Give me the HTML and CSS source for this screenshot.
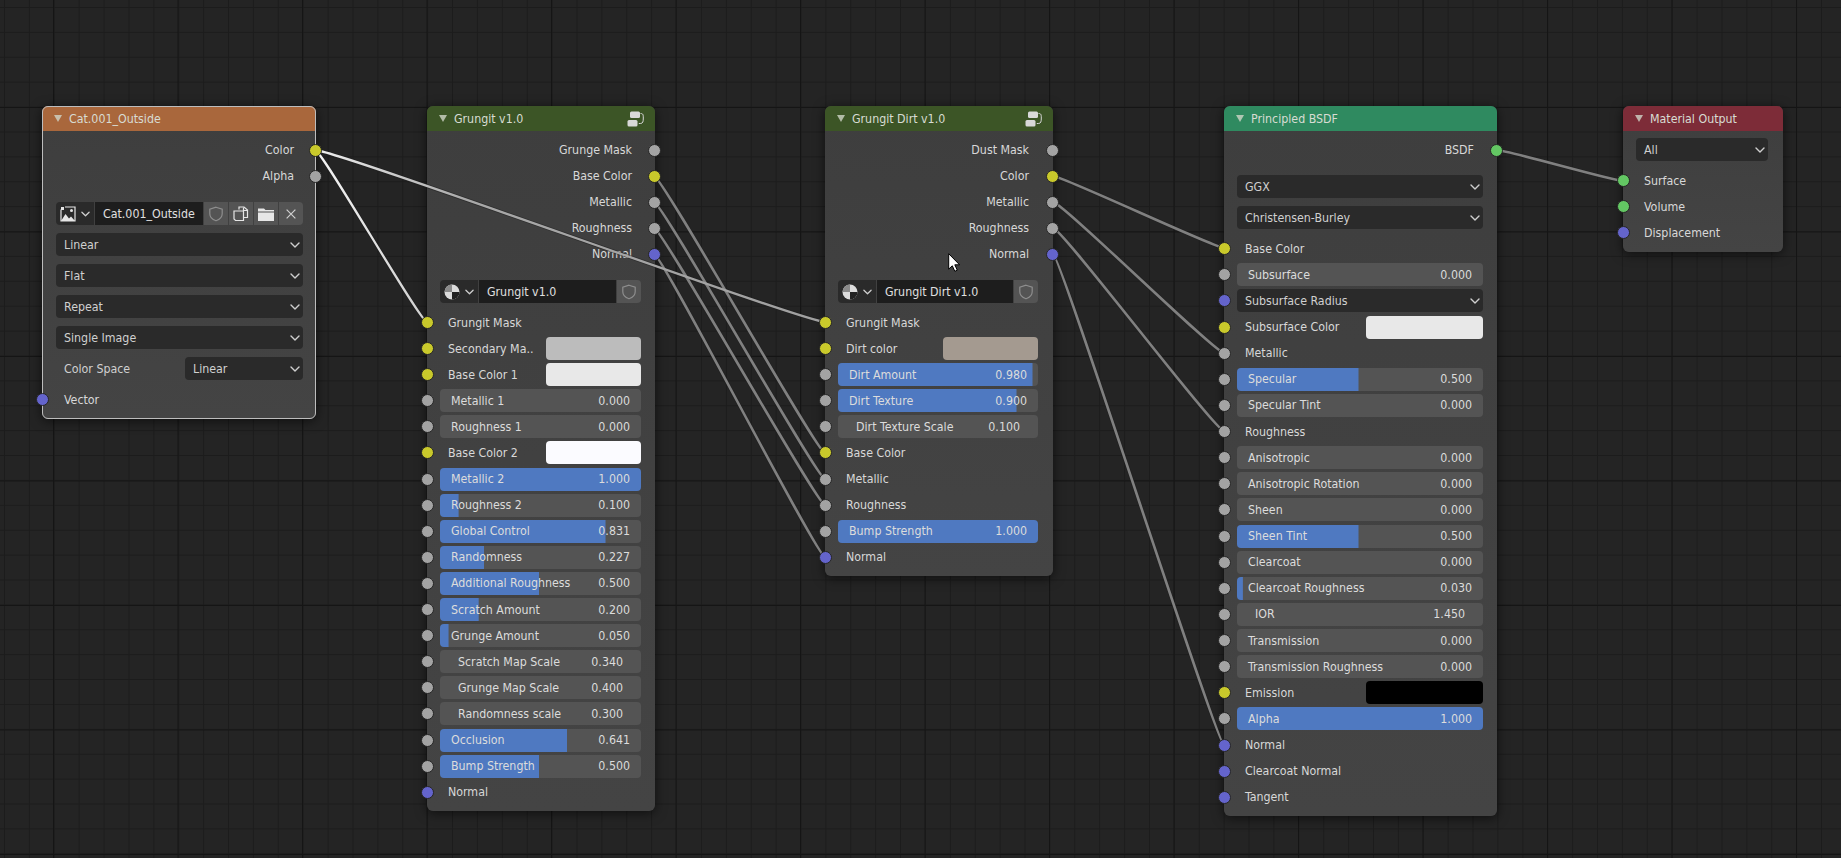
FILE: index.html
```html
<!DOCTYPE html>
<html lang="en">
<head>
<meta charset="utf-8">
<title>Shader Editor</title>
<link rel="stylesheet" href="styles.css">
</head>
<body>
<svg class="defs" width="0" height="0" aria-hidden="true">
  <defs>
    <symbol id="chev" viewBox="0 0 10 6"><path d="M1 1l4 4 4-4" fill="none" stroke="currentColor" stroke-width="1.4" stroke-linecap="round" stroke-linejoin="round"/></symbol>
    <symbol id="shield" viewBox="0 0 16 16"><path d="M8 1.2l6.2 2v4.6c0 3.6-3 5.9-6.2 7-3.2-1.100-6.200-3.400-6.200-7V3.200z" fill="none" stroke="currentColor" stroke-width="1.200"/></symbol>
    <symbol id="copy" viewBox="0 0 16 16"><path d="M6 3.500V1h5l3.500 3v7.500H11M1 5h9.500v9.500H2.500L1 13z" fill="none" stroke="currentColor" stroke-width="1.200"/><path d="M10.500 1.500v3h3.500" fill="none" stroke="currentColor" stroke-width="1.200"/></symbol>
    <symbol id="folder" viewBox="0 0 16 16"><path d="M0 2.500h6l1.500 1.500H16v1.500H0zM0 6.500h16V15H0z" fill="currentColor"/></symbol>
    <symbol id="xmark" viewBox="0 0 16 16"><path d="M3 3l10 10M13 3L3 13" fill="none" stroke="currentColor" stroke-width="1.400"/></symbol>
    <symbol id="image" viewBox="0 0 16 16"><path d="M1 3.500V15h14V1H5" fill="none" stroke="currentColor" stroke-width="1.200"/><path d="M1 15l4.500-7 3.500 4.500 2-2 4 4.500z" fill="currentColor"/><circle cx="11.500" cy="4.500" r="1.500" fill="currentColor"/><path d="M1 1h3v3H1z" fill="currentColor"/></symbol>
    <symbol id="sphere" viewBox="0 0 16 16"><circle cx="8" cy="8" r="7.500" fill="#dcdcdc"/><path d="M8 8V.5A7.500 7.500 0 0 0 .5 8z" fill="#8a8a8a"/><path d="M8 8h7.500A7.500 7.500 0 0 1 8 15.500z" fill="#222"/></symbol>
    <symbol id="group" viewBox="0 0 17 16"><rect x="3" y="0.500" width="10" height="6.500" rx="1.500" fill="currentColor"/><rect x="0.500" y="9" width="10" height="6.500" rx="1.500" fill="currentColor"/><path d="M13.500 2.500c2.500 0 2.800 1 2.800 4.500s-.3 5.500-3 5.500h-1.500" fill="none" stroke="currentColor" stroke-width="1"/></symbol>
    <linearGradient id="selA" gradientUnits="userSpaceOnUse" x1="315" y1="150" x2="427" y2="322"><stop offset="0" stop-color="#f4f4f4"/><stop offset="1" stop-color="#d0d0d0"/></linearGradient>
    <linearGradient id="selB" gradientUnits="userSpaceOnUse" x1="315" y1="150" x2="825" y2="322"><stop offset="0" stop-color="#f0f0f0"/><stop offset=".3" stop-color="#a8a8a8"/><stop offset="1" stop-color="#a0a0a0"/></linearGradient>
    <path id="w1" d="M315 150C322 150 420 322 427 322"/>
    <path id="w2" d="M315 150C336 150 804 322 825 322"/>
    <path id="w3" d="M654 176C662 176 817 453 825 453"/>
    <path id="w4" d="M654 202C662 202 817 479 825 479"/>
    <path id="w5" d="M654 228C662 228 817 505 825 505"/>
    <path id="w6" d="M654 254C662 254 817 557 825 557"/>
    <path id="w7" d="M1053 176C1062 176 1215 248 1224 248"/>
    <path id="w8" d="M1053 202C1062 202 1215 353 1224 353"/>
    <path id="w9" d="M1053 228C1062 228 1215 431 1224 431"/>
    <path id="w10" d="M1053 254C1060 254 1217 745 1224 745"/>
    <path id="w11" d="M1497 150C1506 150 1614 181 1623 181"/>
  </defs>
</svg>

<main class="editor">

  <section class="node node-image selected">
    <header class="node-head head-orange"><i class="tri"></i><span>Cat.001_Outside</span></header>
    <div class="node-body">
      <div class="row out"><span>Color</span><b class="sock sock-r yellow"></b></div>
      <div class="row out"><span>Alpha</span><b class="sock sock-r gray"></b></div>
      <div class="id-row first-widget after-id">
        <div class="id-pick"><svg class="ico"><use href="#image"/></svg><svg class="chev-sm"><use href="#chev"/></svg></div>
        <div class="id-name">Cat.001_Outside</div>
        <div class="id-btn"><svg class="ico dim"><use href="#shield"/></svg></div>
        <div class="id-btn"><svg class="ico"><use href="#copy"/></svg></div>
        <div class="id-btn"><svg class="ico"><use href="#folder"/></svg></div>
        <div class="id-btn"><svg class="ico-x"><use href="#xmark"/></svg></div>
      </div>
      <div class="drop"><span>Linear</span><svg class="chev"><use href="#chev"/></svg></div>
      <div class="drop"><span>Flat</span><svg class="chev"><use href="#chev"/></svg></div>
      <div class="drop"><span>Repeat</span><svg class="chev"><use href="#chev"/></svg></div>
      <div class="drop"><span>Single Image</span><svg class="chev"><use href="#chev"/></svg></div>
      <div class="prop-row"><span class="prop-label">Color Space</span><div class="drop drop-narrow"><span>Linear</span><svg class="chev"><use href="#chev"/></svg></div></div>
      <div class="row in"><b class="sock sock-l blue"></b><span>Vector</span></div>
    </div>
  </section>

  <section class="node node-grungit">
    <header class="node-head head-green"><i class="tri"></i><span>Grungit v1.0</span><svg class="group-ico"><use href="#group"/></svg></header>
    <div class="node-body">
      <div class="row out"><span>Grunge Mask</span><b class="sock sock-r gray"></b></div>
      <div class="row out"><span>Base Color</span><b class="sock sock-r yellow"></b></div>
      <div class="row out"><span>Metallic</span><b class="sock sock-r gray"></b></div>
      <div class="row out"><span>Roughness</span><b class="sock sock-r gray"></b></div>
      <div class="row out"><span>Normal</span><b class="sock sock-r blue"></b></div>
      <div class="id-row first-widget after-id">
        <div class="id-pick"><svg class="ico"><use href="#sphere"/></svg><svg class="chev-sm"><use href="#chev"/></svg></div>
        <div class="id-name">Grungit v1.0</div>
        <div class="id-btn"><svg class="ico dim"><use href="#shield"/></svg></div>
      </div>
      <div class="row in"><b class="sock sock-l yellow"></b><span>Grungit Mask</span></div>
      <div class="row in"><b class="sock sock-l yellow"></b><span>Secondary Ma..</span><i class="swatch sw-n c-silver"></i></div>
      <div class="row in"><b class="sock sock-l yellow"></b><span>Base Color 1</span><i class="swatch sw-n c-pale"></i></div>
      <div class="row wrow"><b class="sock sock-l gray"></b><div class="slider" style="--v:0%"><span>Metallic 1</span><em>0.000</em></div></div>
      <div class="row wrow"><b class="sock sock-l gray"></b><div class="slider" style="--v:0%"><span>Roughness 1</span><em>0.000</em></div></div>
      <div class="row in"><b class="sock sock-l yellow"></b><span>Base Color 2</span><i class="swatch sw-n c-white"></i></div>
      <div class="row wrow"><b class="sock sock-l gray"></b><div class="slider full"><span>Metallic 2</span><em>1.000</em></div></div>
      <div class="row wrow"><b class="sock sock-l gray"></b><div class="slider" style="--v:10%"><span>Roughness 2</span><em>0.100</em></div></div>
      <div class="row wrow"><b class="sock sock-l gray"></b><div class="slider" style="--v:83.1%"><span>Global Control</span><em>0.831</em></div></div>
      <div class="row wrow"><b class="sock sock-l gray"></b><div class="slider" style="--v:22.7%"><span>Randomness</span><em>0.227</em></div></div>
      <div class="row wrow"><b class="sock sock-l gray"></b><div class="slider" style="--v:50%"><span>Additional Roughness</span><em>0.500</em></div></div>
      <div class="row wrow"><b class="sock sock-l gray"></b><div class="slider" style="--v:20%"><span>Scratch Amount</span><em>0.200</em></div></div>
      <div class="row wrow"><b class="sock sock-l gray"></b><div class="slider" style="--v:5%"><span>Grunge Amount</span><em>0.050</em></div></div>
      <div class="row wrow"><b class="sock sock-l gray"></b><div class="slider plain"><span>Scratch Map Scale</span><em>0.340</em></div></div>
      <div class="row wrow"><b class="sock sock-l gray"></b><div class="slider plain"><span>Grunge Map Scale</span><em>0.400</em></div></div>
      <div class="row wrow"><b class="sock sock-l gray"></b><div class="slider plain"><span>Randomness scale</span><em>0.300</em></div></div>
      <div class="row wrow"><b class="sock sock-l gray"></b><div class="slider" style="--v:64.1%"><span>Occlusion</span><em>0.641</em></div></div>
      <div class="row wrow"><b class="sock sock-l gray"></b><div class="slider" style="--v:50%"><span>Bump Strength</span><em>0.500</em></div></div>
      <div class="row in"><b class="sock sock-l blue"></b><span>Normal</span></div>
    </div>
  </section>

  <section class="node node-dirt">
    <header class="node-head head-green"><i class="tri"></i><span>Grungit Dirt v1.0</span><svg class="group-ico"><use href="#group"/></svg></header>
    <div class="node-body">
      <div class="row out"><span>Dust Mask</span><b class="sock sock-r gray"></b></div>
      <div class="row out"><span>Color</span><b class="sock sock-r yellow"></b></div>
      <div class="row out"><span>Metallic</span><b class="sock sock-r gray"></b></div>
      <div class="row out"><span>Roughness</span><b class="sock sock-r gray"></b></div>
      <div class="row out"><span>Normal</span><b class="sock sock-r blue"></b></div>
      <div class="id-row first-widget after-id">
        <div class="id-pick"><svg class="ico"><use href="#sphere"/></svg><svg class="chev-sm"><use href="#chev"/></svg></div>
        <div class="id-name">Grungit Dirt v1.0</div>
        <div class="id-btn"><svg class="ico dim"><use href="#shield"/></svg></div>
      </div>
      <div class="row in"><b class="sock sock-l yellow"></b><span>Grungit Mask</span></div>
      <div class="row in"><b class="sock sock-l yellow"></b><span>Dirt color</span><i class="swatch sw-n c-taupe"></i></div>
      <div class="row wrow"><b class="sock sock-l gray"></b><div class="slider" style="--v:98%"><span>Dirt Amount</span><em>0.980</em></div></div>
      <div class="row wrow"><b class="sock sock-l gray"></b><div class="slider" style="--v:90%"><span>Dirt Texture</span><em>0.900</em></div></div>
      <div class="row wrow"><b class="sock sock-l gray"></b><div class="slider plain"><span>Dirt Texture Scale</span><em>0.100</em></div></div>
      <div class="row in"><b class="sock sock-l yellow"></b><span>Base Color</span></div>
      <div class="row in"><b class="sock sock-l gray"></b><span>Metallic</span></div>
      <div class="row in"><b class="sock sock-l gray"></b><span>Roughness</span></div>
      <div class="row wrow"><b class="sock sock-l gray"></b><div class="slider full"><span>Bump Strength</span><em>1.000</em></div></div>
      <div class="row in"><b class="sock sock-l blue"></b><span>Normal</span></div>
    </div>
  </section>

  <section class="node node-bsdf">
    <header class="node-head head-teal"><i class="tri"></i><span>Principled BSDF</span></header>
    <div class="node-body">
      <div class="row out"><span>BSDF</span><b class="sock sock-r green"></b></div>
      <div class="drop first-widget"><span>GGX</span><svg class="chev"><use href="#chev"/></svg></div>
      <div class="drop last-widget"><span>Christensen-Burley</span><svg class="chev"><use href="#chev"/></svg></div>
      <div class="row in"><b class="sock sock-l yellow"></b><span>Base Color</span></div>
      <div class="row wrow"><b class="sock sock-l gray"></b><div class="slider" style="--v:0%"><span>Subsurface</span><em>0.000</em></div></div>
      <div class="row wrow"><b class="sock sock-l blue"></b><div class="drop drop-inline"><span>Subsurface Radius</span><svg class="chev"><use href="#chev"/></svg></div></div>
      <div class="row in"><b class="sock sock-l yellow"></b><span>Subsurface Color</span><i class="swatch sw-w c-pale"></i></div>
      <div class="row in"><b class="sock sock-l gray"></b><span>Metallic</span></div>
      <div class="row wrow"><b class="sock sock-l gray"></b><div class="slider" style="--v:50%"><span>Specular</span><em>0.500</em></div></div>
      <div class="row wrow"><b class="sock sock-l gray"></b><div class="slider" style="--v:0%"><span>Specular Tint</span><em>0.000</em></div></div>
      <div class="row in"><b class="sock sock-l gray"></b><span>Roughness</span></div>
      <div class="row wrow"><b class="sock sock-l gray"></b><div class="slider" style="--v:0%"><span>Anisotropic</span><em>0.000</em></div></div>
      <div class="row wrow"><b class="sock sock-l gray"></b><div class="slider" style="--v:0%"><span>Anisotropic Rotation</span><em>0.000</em></div></div>
      <div class="row wrow"><b class="sock sock-l gray"></b><div class="slider" style="--v:0%"><span>Sheen</span><em>0.000</em></div></div>
      <div class="row wrow"><b class="sock sock-l gray"></b><div class="slider" style="--v:50%"><span>Sheen Tint</span><em>0.500</em></div></div>
      <div class="row wrow"><b class="sock sock-l gray"></b><div class="slider" style="--v:0%"><span>Clearcoat</span><em>0.000</em></div></div>
      <div class="row wrow"><b class="sock sock-l gray"></b><div class="slider" style="--v:3%"><span>Clearcoat Roughness</span><em>0.030</em></div></div>
      <div class="row wrow"><b class="sock sock-l gray"></b><div class="slider plain"><span>IOR</span><em>1.450</em></div></div>
      <div class="row wrow"><b class="sock sock-l gray"></b><div class="slider" style="--v:0%"><span>Transmission</span><em>0.000</em></div></div>
      <div class="row wrow"><b class="sock sock-l gray"></b><div class="slider" style="--v:0%"><span>Transmission Roughness</span><em>0.000</em></div></div>
      <div class="row in"><b class="sock sock-l yellow"></b><span>Emission</span><i class="swatch sw-w c-black"></i></div>
      <div class="row wrow"><b class="sock sock-l gray"></b><div class="slider full"><span>Alpha</span><em>1.000</em></div></div>
      <div class="row in"><b class="sock sock-l blue"></b><span>Normal</span></div>
      <div class="row in"><b class="sock sock-l blue"></b><span>Clearcoat Normal</span></div>
      <div class="row in"><b class="sock sock-l blue"></b><span>Tangent</span></div>
    </div>
  </section>

  <section class="node node-output">
    <header class="node-head head-red"><i class="tri"></i><span>Material Output</span></header>
    <div class="node-body body-output">
      <div class="drop drop-top"><span>All</span><svg class="chev"><use href="#chev"/></svg></div>
      <div class="row in"><b class="sock sock-l green"></b><span>Surface</span></div>
      <div class="row in"><b class="sock sock-l green"></b><span>Volume</span></div>
      <div class="row in"><b class="sock sock-l blue"></b><span>Displacement</span></div>
    </div>
  </section>

  <svg class="wires" viewBox="0 0 1841 858" aria-hidden="true">
    <g class="wire-bg">
      <use href="#w1"/><use href="#w2"/><use href="#w3"/><use href="#w4"/><use href="#w5"/><use href="#w6"/><use href="#w7"/><use href="#w8"/><use href="#w9"/><use href="#w10"/><use href="#w11"/>
    </g>
    <g class="wire-fg">
      <use href="#w3"/><use href="#w4"/><use href="#w5"/><use href="#w6"/><use href="#w7"/><use href="#w8"/><use href="#w9"/><use href="#w10"/><use href="#w11"/>
      <use href="#w1" class="wire-sel-a"/><use href="#w2" class="wire-sel-b"/>
    </g>
  </svg>

  <svg class="cursor" viewBox="0 0 12 19" aria-hidden="true"><path d="M.7.7v15.400l3.600-3.300 2.500 5.500 2.500-1.100-2.500-5.400h4.800z" fill="#fff" stroke="#000" stroke-width="1"/></svg>
</main>
</body>
</html>
```

FILE: styles.css
```css
* { box-sizing: border-box; }
html, body { margin: 0; padding: 0; background: #232323; }
.defs { position: absolute; }

.editor {
  position: relative;
  z-index: 0;
  width: 1841px;
  height: 858px;
  overflow: hidden;
  font-family: "DejaVu Sans Condensed", "DejaVu Sans", sans-serif;
  font-stretch: condensed;
  font-size: 12.3px;
  color: #d8d8d8;
  background-color: #242424;
  background-image:
    linear-gradient(#151515 1px, transparent 1px),
    linear-gradient(90deg, #151515 1px, transparent 1px),
    linear-gradient(#1c1c1c 1px, transparent 1px),
    linear-gradient(90deg, #1c1c1c 1px, transparent 1px);
  background-size: 124.5px 124.5px, 124.5px 124.5px, 24.9px 24.9px, 24.9px 24.9px;
  background-position: 0 107px, 53px 0, 0 7px, 4px 0;
}

/* nodes on the free canvas */
.node {
  position: absolute;
  top: 106px;
  border-radius: 6px;
  background: linear-gradient(#3e3e3e, #444444);
  box-shadow: 0 2px 12px rgba(0, 0, 0, .6);
}
.node-image  { left: 42px;   width: 274px; }
.node-grungit{ left: 427px;  width: 228px; }
.node-dirt   { left: 825px;  width: 228px; }
.node-bsdf   { left: 1224px; width: 273px; }
.node-output { left: 1623px; width: 160px; }
.selected { outline: 1.5px solid #bdbdbd; outline-offset: -1px; }

.node-head {
  display: flex;
  align-items: center;
  height: 25px;
  padding: 0 12px;
  border-radius: 6px 6px 0 0;
  color: #d8dcd3;
}
.head-orange { background: #a9673c; }
.head-green  { background: #3c5526; }
.head-teal   { background: #2f8a60; }
.head-red    { background: #7d2c38; }
.tri {
  width: 0; height: 0;
  margin-right: 7px;
  border: 4px solid transparent;
  border-top: 7px solid #cfd6c8;
  border-bottom: 0;
  opacity: .8;
}
.group-ico { width: 17px; height: 16px; margin-left: auto; margin-right: -1px; color: #d8d8d8; }

.node-body { display: flex; flex-direction: column; padding: 6px 14px 6px 13px; }
.node-image .node-body { padding: 6px 13px 6px 14px; }
.node-dirt .node-body { padding-right: 15px; }
.body-output { padding-top: 7px; padding-right: 15px; }

.row {
  display: flex;
  align-items: center;
  flex: none;
  height: 26.1px;
}
.node-bsdf .row { height: 26.14px; }
.row.in { padding-left: 8px; justify-content: space-between; }
.row.out { justify-content: flex-end; padding-right: 9px; }
.wrow { padding: 0; }

/* sockets straddle the node edge */
.sock {
  position: absolute;
  z-index: 2;
  width: 13px; height: 13px;
  border-radius: 50%;
  border: 1px solid #262626;
}
.sock-l { left: -6.500px; }
.sock-r { right: -6px; }
.yellow { background: #c9c92b; }
.gray   { background: #a3a3a3; }
.blue   { background: #6464cc; }
.green  { background: #63c763; }

/* widgets */
.drop {
  display: flex;
  align-items: center;
  justify-content: space-between;
  flex: none;
  height: 23px;
  margin-bottom: 8px;
  padding: 0 3px 0 8px;
  border-radius: 4px;
  background: #2a2a2a;
  color: #d0d0d0;
}
.first-widget { margin-top: 12px; }
.after-id { margin-top: 13px; }
.last-widget { margin-bottom: 6.500px; }
.drop-inline { width: 100%; margin: 0; }
.drop-top { margin: 0 0 6.500px; }
.drop-narrow { width: 118px; margin: 0; }
.chev { width: 10px; height: 6px; color: #cfcfcf; }
.chev-sm { width: 9px; height: 6px; color: #cfcfcf; }

.prop-row { display: flex; align-items: center; justify-content: space-between; height: 23px; margin-bottom: 6.500px; padding-left: 8px; flex: none; }
.prop-label { color: #d0d0d0; }

.slider {
  display: flex;
  align-items: center;
  justify-content: space-between;
  width: 100%;
  height: 23px;
  padding: 0 11px;
  border-radius: 4px;
  background: linear-gradient(#4f79c1, #4f79c1) no-repeat left / calc(var(--v, 0%) - 1.500px) 100%, #545454;
  color: #dcdcdc;
}
.slider.full { background: #4f79c1; }
.slider em { font-style: normal; }
.slider.plain { padding: 0 18px; }

.swatch { height: 23px; border-radius: 4px; flex: none; }
.sw-n { width: 95px; }
.sw-w { width: 117px; }
.c-silver { background: #bcbcbc; }
.c-pale   { background: #e8e8e8; }
.c-white  { background: #fbfbff; }
.c-taupe  { background: #a49a90; }
.c-black  { background: #000; }

.id-row { display: flex; flex: none; height: 23px; margin-bottom: 6px; gap: 1px; }
.node-image .id-row { margin-bottom: 8px; }
.id-pick {
  display: flex; align-items: center; gap: 5px;
  width: 38px;
  padding-left: 4px;
  border-radius: 4px 0 0 4px;
  background: #2a2a2a;
}
.id-name {
  display: flex; align-items: center;
  flex: 1;
  padding-left: 8px;
  background: #1d1d1d;
  color: #e0e0e0;
}
.id-btn {
  display: flex; align-items: center; justify-content: center;
  width: 24px;
  background: #545454;
}
.id-btn:last-child { border-radius: 0 4px 4px 0; }
.ico { width: 16px; height: 16px; color: #e6e6e6; }
.ico.dim { color: #8e8e8e; }
.ico-x { width: 14px; height: 14px; color: #d0d0d0; }

/* links */
.wires { position: absolute; left: 0; top: 0; z-index: 1; width: 1841px; height: 858px; pointer-events: none; }
.wire-bg { fill: none; stroke: #1e1e1e; stroke-opacity: .5; stroke-width: 3.800; }
.wire-fg { fill: none; stroke: #808080; stroke-width: 2.600; }
.wire-sel-a, .wire-sel-b { stroke-width: 2.300; }
.wire-sel-a { stroke: url(#selA); }
.wire-sel-b { stroke: url(#selB); }

.cursor { position: absolute; left: 948px; top: 253px; z-index: 3; width: 12px; height: 19px; }
```
